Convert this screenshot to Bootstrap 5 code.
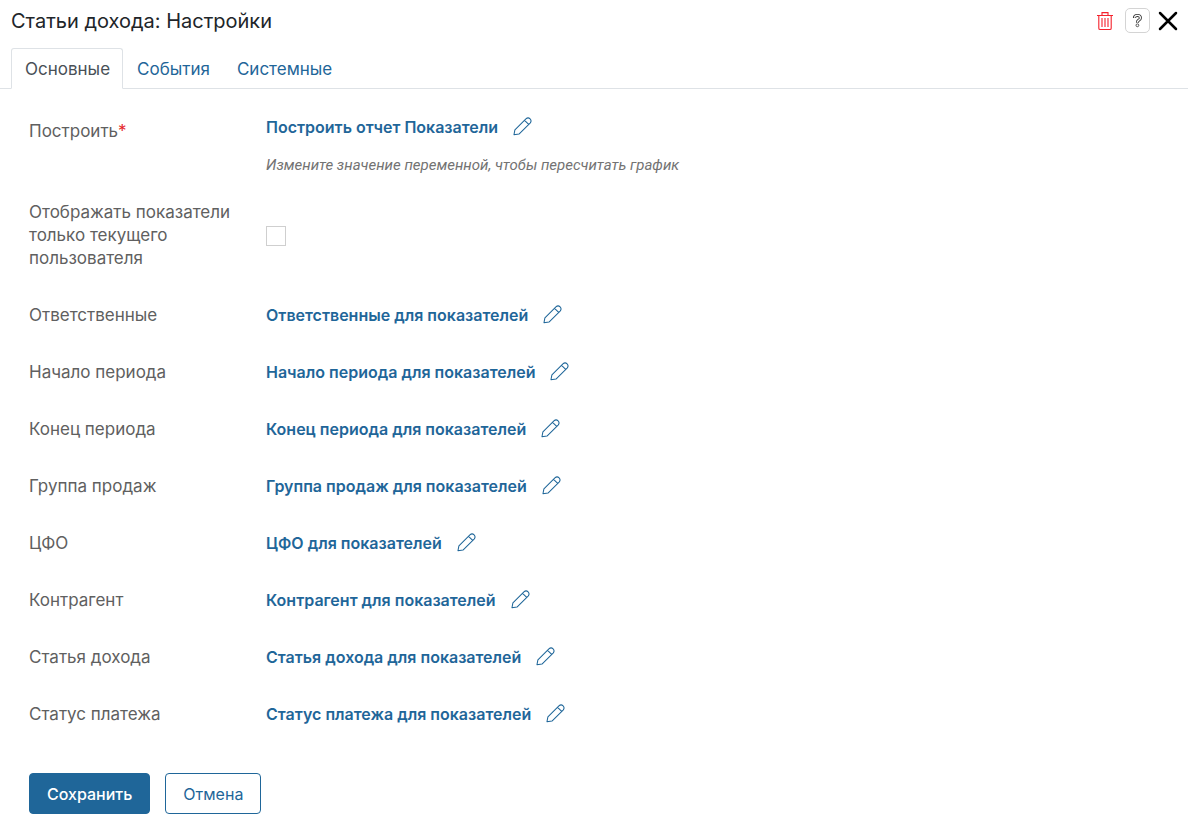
<!DOCTYPE html>
<html lang="ru">
<head>
<meta charset="utf-8">
<meta name="viewport" content="width=device-width, initial-scale=1">
<title>Статьи дохода: Настройки</title>
<link href="https://cdn.jsdelivr.net/npm/bootstrap@5.3.0/dist/css/bootstrap.min.css" rel="stylesheet">
<style>
  :root { --accent: #1f6699; --text-muted-dark: #606060; }
  body { font-family: Inter, "Liberation Sans", sans-serif; font-size: 17px; line-height: 23px; color: #212529; background: #fff; }
  .page-title { font-size: 20px; line-height: 26px; font-weight: 400; }
  .panel-header { padding: 8px 10px 8px 11px; height: 48px; }
  .icon-button { border: 0; background: none; padding: 0; line-height: 0; }
  .help-button { width: 25px; height: 25px; border: 1px solid #d4d4d4; border-radius: 5px; }
  .settings-tabs { padding-left: 11px; --bs-nav-tabs-border-radius: 3px; }
  .settings-tabs .nav-link { height: 41px; padding: 9px 12px 7px 13px; color: var(--accent); }
  .settings-tabs .nav-link.active { color: #495057; }
  .settings-form { padding: 13px 29px 7px; }
  .field-row { display: grid; grid-template-columns: 213px 1fr; column-gap: 24px; align-items: center; padding: 17px 0; }
  .field-row-top { align-items: start; padding: 14px 0 7px; }
  .field-row-top .field-label { padding-top: 4px; }
  .field-label { color: var(--text-muted-dark); }
  .required-mark { color: #e5252a; }
  .field-link { color: var(--accent); font-weight: 600; text-decoration: none; font-size: 16px; }
  .field-link:hover { text-decoration: underline; }
  .field-value { display: flex; align-items: center; gap: 15px; }
  .field-value .icon-button { padding-bottom: 2px; }
  .field-note { font-family: Roboto, "Liberation Sans", sans-serif; font-size: 15px; font-style: italic; color: #737373; margin-top: 15px; }
  .form-check-input.plain-check { width: 20px; height: 20px; margin: 0; border: 1px solid #cfcfcf; border-radius: 0; }
  .form-actions { padding-top: 30px; gap: 15px; }
  .form-actions .btn { --bs-btn-padding-x: 17px; --bs-btn-font-size: 16px; --bs-btn-line-height: 23px; --bs-btn-border-radius: 4px; --bs-btn-border-color: var(--accent); padding-top: 9px; padding-bottom: 7px; }
  .btn-save { --bs-btn-bg: var(--accent); --bs-btn-color: #fff; --bs-btn-font-weight: 500; --bs-btn-hover-bg: #185580; --bs-btn-hover-color: #fff; }
  .btn-cancel { --bs-btn-color: var(--accent); --bs-btn-hover-color: #fff; --bs-btn-hover-bg: var(--accent); }
</style>
</head>
<body>
<svg class="d-none" aria-hidden="true">
  <symbol id="pencil" viewBox="0 0 20 20">
    <path d="M1 18.7 2 13.6 13.6 2Q15.9-.1 18 2 20 4.2 18 6.4L6.3 17.9ZM12.2 3.5 16.5 7.8" fill="none" stroke="#1f6699" stroke-width="1.1" stroke-linejoin="round"/>
  </symbol>
</svg>

<header class="panel-header d-flex align-items-start justify-content-between">
  <h1 class="page-title mb-0">Статьи дохода: Настройки</h1>
  <div class="d-flex align-items-center">
    <button type="button" class="icon-button me-2 pe-1" aria-label="Удалить">
      <svg width="16" height="20" viewBox="0 0 16 20" fill="none" stroke="#f5222d" stroke-width="1.1"><path d="M0 4.5H16M5 4.5V1.6H11V4.5M1.8 4.5V17.2Q1.8 18.5 3.1 18.5H12.9Q14.2 18.5 14.2 17.2V4.5M5 7V16M8 7V16M11 7V16"/></svg>
    </button>
    <button type="button" class="icon-button help-button me-2" aria-label="Справка">
      <svg width="11" height="16" viewBox="0 0 11 16"><path d="M2.4 5Q2.4 2.4 5.4 2.4 8.4 2.4 8.4 4.9 8.4 6.3 6.8 7.1 5.4 7.9 5.4 9.8" fill="none" stroke="#333" stroke-width="3"/><path d="M2.5 4.7Q2.6 2.4 5.4 2.4 8.4 2.4 8.4 4.9 8.4 6.3 6.8 7.1 5.4 7.9 5.4 9.4" fill="none" stroke="#fff" stroke-width="1.3"/><circle cx="5.4" cy="12.3" r="1.4" fill="#fff" stroke="#333" stroke-width=".8"/></svg>
    </button>
    <button type="button" class="icon-button" aria-label="Закрыть">
      <svg width="20" height="20" viewBox="0 0 20 20"><path d="M2 2 18 18M18 2 2 18" stroke="#000" stroke-width="2.5" stroke-linecap="round"/></svg>
    </button>
  </div>
</header>

<ul class="nav nav-tabs settings-tabs" role="tablist">
  <li class="nav-item"><a class="nav-link active" href="#main" role="tab" aria-selected="true">Основные</a></li>
  <li class="nav-item"><a class="nav-link" href="#events" role="tab" aria-selected="false">События</a></li>
  <li class="nav-item"><a class="nav-link" href="#system" role="tab" aria-selected="false">Системные</a></li>
</ul>

<form class="settings-form" id="main">
  <div class="field-row field-row-top">
    <div class="field-label">Построить<span class="required-mark">*</span></div>
    <div>
      <div class="field-value"><a class="field-link" href="#">Построить отчет Показатели</a><button type="button" class="icon-button" aria-label="Изменить"><svg width="19" height="19"><use href="#pencil"/></svg></button></div>
      <div class="field-note">Измените значение переменной, чтобы пересчитать график</div>
    </div>
  </div>
  <div class="field-row">
    <label class="field-label" for="own-only">Отображать показатели только текущего пользователя</label>
    <div class="field-value"><input class="form-check-input plain-check" type="checkbox" id="own-only"></div>
  </div>
  <div class="field-row">
    <div class="field-label">Ответственные</div>
    <div class="field-value"><a class="field-link" href="#">Ответственные для показателей</a><button type="button" class="icon-button" aria-label="Изменить"><svg width="19" height="19"><use href="#pencil"/></svg></button></div>
  </div>
  <div class="field-row">
    <div class="field-label">Начало периода</div>
    <div class="field-value"><a class="field-link" href="#">Начало периода для показателей</a><button type="button" class="icon-button" aria-label="Изменить"><svg width="19" height="19"><use href="#pencil"/></svg></button></div>
  </div>
  <div class="field-row">
    <div class="field-label">Конец периода</div>
    <div class="field-value"><a class="field-link" href="#">Конец периода для показателей</a><button type="button" class="icon-button" aria-label="Изменить"><svg width="19" height="19"><use href="#pencil"/></svg></button></div>
  </div>
  <div class="field-row">
    <div class="field-label">Группа продаж</div>
    <div class="field-value"><a class="field-link" href="#">Группа продаж для показателей</a><button type="button" class="icon-button" aria-label="Изменить"><svg width="19" height="19"><use href="#pencil"/></svg></button></div>
  </div>
  <div class="field-row">
    <div class="field-label">ЦФО</div>
    <div class="field-value"><a class="field-link" href="#">ЦФО для показателей</a><button type="button" class="icon-button" aria-label="Изменить"><svg width="19" height="19"><use href="#pencil"/></svg></button></div>
  </div>
  <div class="field-row">
    <div class="field-label">Контрагент</div>
    <div class="field-value"><a class="field-link" href="#">Контрагент для показателей</a><button type="button" class="icon-button" aria-label="Изменить"><svg width="19" height="19"><use href="#pencil"/></svg></button></div>
  </div>
  <div class="field-row">
    <div class="field-label">Статья дохода</div>
    <div class="field-value"><a class="field-link" href="#">Статья дохода для показателей</a><button type="button" class="icon-button" aria-label="Изменить"><svg width="19" height="19"><use href="#pencil"/></svg></button></div>
  </div>
  <div class="field-row">
    <div class="field-label">Статус платежа</div>
    <div class="field-value"><a class="field-link" href="#">Статус платежа для показателей</a><button type="button" class="icon-button" aria-label="Изменить"><svg width="19" height="19"><use href="#pencil"/></svg></button></div>
  </div>
  <div class="form-actions d-flex">
    <button type="submit" class="btn btn-save">Сохранить</button>
    <button type="button" class="btn btn-cancel">Отмена</button>
  </div>
</form>
<script src="https://cdn.jsdelivr.net/npm/bootstrap@5.3.0/dist/js/bootstrap.bundle.min.js"></script>
</body>
</html>
